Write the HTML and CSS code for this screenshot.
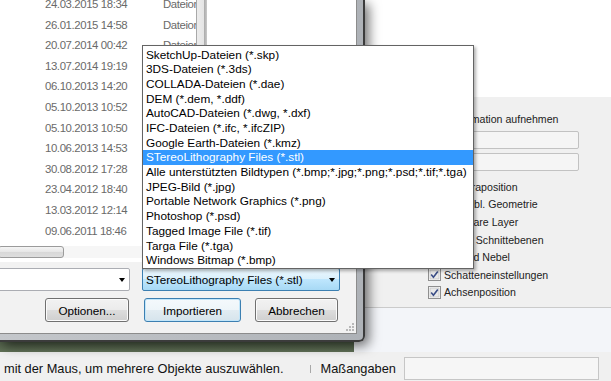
FILE: index.html
```html
<!DOCTYPE html>
<html lang="de">
<head>
<meta charset="utf-8">
<title>Importieren</title>
<link rel="stylesheet" href="styles.css">
</head>
<body>
<div class="app">
  <div class="main">
    <div class="viewport"></div>
    <div class="tray">
      <div class="tray-head"></div>
      <div class="tray-panel">
        <div class="tray-label">Kamerainformation aufnehmen</div>
        <div class="tray-input"></div>
        <div class="tray-input"></div>
        <ul class="checks">
          <li><svg class="cb" viewBox="0 0 13 13"><rect x="0.5" y="0.5" width="12" height="12" fill="#fff" stroke="#8f8f8f"/><rect x="2" y="2" width="9" height="9" fill="#e9e9e9" stroke="#c4c4c4" stroke-width="0.8"/><path d="M3.2 6.6 L5.4 9.3 L9.8 3.4" fill="none" stroke="#3a4d86" stroke-width="1.6"/></svg>Kameraposition</li>
          <li><svg class="cb" viewBox="0 0 13 13"><rect x="0.5" y="0.5" width="12" height="12" fill="#fff" stroke="#8f8f8f"/><rect x="2" y="2" width="9" height="9" fill="#e9e9e9" stroke="#c4c4c4" stroke-width="0.8"/><path d="M3.2 6.6 L5.4 9.3 L9.8 3.4" fill="none" stroke="#3a4d86" stroke-width="1.6"/></svg>Ausgebl. Geometrie</li>
          <li><svg class="cb" viewBox="0 0 13 13"><rect x="0.5" y="0.5" width="12" height="12" fill="#fff" stroke="#8f8f8f"/><rect x="2" y="2" width="9" height="9" fill="#e9e9e9" stroke="#c4c4c4" stroke-width="0.8"/><path d="M3.2 6.6 L5.4 9.3 L9.8 3.4" fill="none" stroke="#3a4d86" stroke-width="1.6"/></svg>Sichtbare Layer</li>
          <li><svg class="cb" viewBox="0 0 13 13"><rect x="0.5" y="0.5" width="12" height="12" fill="#fff" stroke="#8f8f8f"/><rect x="2" y="2" width="9" height="9" fill="#e9e9e9" stroke="#c4c4c4" stroke-width="0.8"/><path d="M3.2 6.6 L5.4 9.3 L9.8 3.4" fill="none" stroke="#3a4d86" stroke-width="1.6"/></svg>Aktive Schnittebenen</li>
          <li><svg class="cb" viewBox="0 0 13 13"><rect x="0.5" y="0.5" width="12" height="12" fill="#fff" stroke="#8f8f8f"/><rect x="2" y="2" width="9" height="9" fill="#e9e9e9" stroke="#c4c4c4" stroke-width="0.8"/><path d="M3.2 6.6 L5.4 9.3 L9.8 3.4" fill="none" stroke="#3a4d86" stroke-width="1.6"/></svg>Stil und Nebel</li>
          <li><svg class="cb" viewBox="0 0 13 13"><rect x="0.5" y="0.5" width="12" height="12" fill="#fff" stroke="#8f8f8f"/><rect x="2" y="2" width="9" height="9" fill="#e9e9e9" stroke="#c4c4c4" stroke-width="0.8"/><path d="M3.2 6.6 L5.4 9.3 L9.8 3.4" fill="none" stroke="#3a4d86" stroke-width="1.6"/></svg>Schatteneinstellungen</li>
          <li><svg class="cb" viewBox="0 0 13 13"><rect x="0.5" y="0.5" width="12" height="12" fill="#fff" stroke="#8f8f8f"/><rect x="2" y="2" width="9" height="9" fill="#e9e9e9" stroke="#c4c4c4" stroke-width="0.8"/><path d="M3.2 6.6 L5.4 9.3 L9.8 3.4" fill="none" stroke="#3a4d86" stroke-width="1.6"/></svg>Achsenposition</li>
        </ul>
      </div>
      <div class="tray-foot"></div>
    </div>
  </div>
  <div class="statusbar">
    <span class="status-text">mit der Maus, um mehrere Objekte auszuwählen.</span>
    <span class="sep"></span>
    <span class="status-label">Maßangaben</span>
    <span class="vcb"></span>
  </div>

  <div class="dialog">
    <div class="dlg-body">
      <div class="browser">
        <div class="files">
          <div class="rows">
            <div class="rows-inner">
              <div class="row"><span class="date">24.03.2015 18:34</span>Dateiordner</div>
              <div class="row"><span class="date">26.01.2015 14:58</span>Dateiordner</div>
              <div class="row"><span class="date">20.07.2014 00:42</span>Dateiordner</div>
              <div class="row"><span class="date">13.07.2014 19:19</span>Dateiordner</div>
              <div class="row"><span class="date">06.10.2013 14:20</span>Dateiordner</div>
              <div class="row"><span class="date">05.10.2013 10:52</span>Dateiordner</div>
              <div class="row"><span class="date">05.10.2013 10:50</span>Dateiordner</div>
              <div class="row"><span class="date">10.06.2013 14:53</span>Dateiordner</div>
              <div class="row"><span class="date">30.08.2012 17:28</span>Dateiordner</div>
              <div class="row"><span class="date">23.04.2012 18:40</span>Dateiordner</div>
              <div class="row"><span class="date">13.03.2012 12:14</span>Dateiordner</div>
              <div class="row"><span class="date">09.06.2011 18:46</span>Dateiordner</div>
            </div>
          </div>
          <div class="hscroll"><div class="thumb"></div></div>
        </div>
        <div class="splitter"></div>
        <div class="preview"></div>
      </div>
      <div class="dlg-bottom">
        <div class="dlg-row">
          <div class="combo name"><span class="arrow"></span></div>
          <div class="combo type"><span class="combo-text">STereoLithography Files (*.stl)</span><span class="arrow"></span></div>
        </div>
        <div class="dlg-row buttons">
          <button class="btn b-opt">Optionen...</button>
          <button class="btn b-imp">Importieren</button>
          <button class="btn b-abb">Abbrechen</button>
        </div>
        <svg class="grip" viewBox="0 0 9 9"><g fill="#b8b8b8"><rect x="7" y="1" width="2" height="2"/><rect x="4" y="4" width="2" height="2"/><rect x="7" y="4" width="2" height="2"/><rect x="1" y="7" width="2" height="2"/><rect x="4" y="7" width="2" height="2"/><rect x="7" y="7" width="2" height="2"/></g></svg>
      </div>
    </div>
  </div>

  <ul class="droplist">
    <li>SketchUp-Dateien (*.skp)</li>
    <li>3DS-Dateien (*.3ds)</li>
    <li>COLLADA-Dateien (*.dae)</li>
    <li>DEM (*.dem, *.ddf)</li>
    <li>AutoCAD-Dateien (*.dwg, *.dxf)</li>
    <li>IFC-Dateien (*.ifc, *.ifcZIP)</li>
    <li>Google Earth-Dateien (*.kmz)</li>
    <li class="sel">STereoLithography Files (*.stl)</li>
    <li>Alle unterstützten Bildtypen (*.bmp;*.jpg;*.png;*.psd;*.tif;*.tga)</li>
    <li>JPEG-Bild (*.jpg)</li>
    <li>Portable Network Graphics (*.png)</li>
    <li>Photoshop (*.psd)</li>
    <li>Tagged Image File (*.tif)</li>
    <li>Targa File (*.tga)</li>
    <li>Windows Bitmap (*.bmp)</li>
  </ul>
</div>
</body>
</html>
```

FILE: styles.css
```css
html, body {
  margin: 0;
  padding: 0;
}
body {
  width: 611px;
  height: 381px;
  overflow: hidden;
  font-family: "Liberation Sans", Arial, sans-serif;
  color: #000;
}
.app {
  position: relative;
  width: 611px;
  height: 381px;
  overflow: hidden;
  background: #f0f0f0;
}

/* main application window */
.main {
  display: flex;
  height: 352px;
}
.viewport {
  width: 354px;
  flex: none;
  background: linear-gradient(#3f4c39 0, #4e5d47 340px, #617257 352px);
}
.tray {
  flex: 1;
  display: flex;
  flex-direction: column;
}
.tray-head {
  height: 97px;
  background: #fff;
}
.tray-panel {
  height: 211px;
  box-sizing: border-box;
  background: #f0f0f0;
  border-bottom: 1px solid #cbcbcb;
  padding: 15px 32px 0 59px;
  font-size: 10.6px;
  color: #222;
}
.tray-label {
  line-height: 14px;
  white-space: nowrap;
}
.tray-input {
  height: 18px;
  box-sizing: border-box;
  border: 1px solid #c2c2c2;
  border-radius: 2px;
  background: #f5f5f5;
  margin-top: 5px;
}
.tray-input + .tray-input {
  margin-top: 4px;
}
.checks {
  list-style: none;
  margin: 7px 0 0 15px;
  padding: 0;
}
.checks li {
  height: 17.6px;
  display: flex;
  align-items: center;
  white-space: nowrap;
}
.cb {
  width: 13px;
  height: 13px;
  margin-right: 3px;
  flex: none;
}
.tray-foot {
  flex: 1;
  background: #f3f5f9;
}

/* status bar */
.statusbar {
  height: 29px;
  display: flex;
  align-items: flex-start;
  background: #f0f0f0;
  font-size: 12.8px;
  color: #111;
  white-space: nowrap;
}
.status-text {
  margin: 9px 0 0 4px;
  line-height: 16px;
}
.sep {
  width: 1px;
  height: 8px;
  background: #a8a8a8;
  margin: 13px 0 0 26px;
}
.status-label {
  margin: 9px 0 0 10px;
  line-height: 16px;
}
.vcb {
  width: 195px;
  height: 23px;
  box-sizing: border-box;
  border: 1px solid #c6c6c6;
  background: #f6f6f6;
  margin: 5px 0 0 8px;
}

/* file dialog */
.dialog {
  position: absolute;
  left: 0;
  top: 0;
  width: 365px;
  height: 342px;
  box-sizing: border-box;
  padding: 0 6px 6px 0;
  background: linear-gradient(90deg, #c4c7cb, #aeb2b7);
  border-right: 2px solid #3b3b3b;
  border-bottom: 2px solid #3b3b3b;
  border-bottom-right-radius: 6px;
  box-shadow: 4px 4px 12px rgba(0, 0, 0, 0.55);
}
.dlg-body {
  height: 100%;
  box-sizing: border-box;
  border-right: 1px solid #8c8c8c;
  border-bottom: 1px solid #8c8c8c;
  background: #f2f2f2;
  display: flex;
  flex-direction: column;
  position: relative;
}
.browser {
  height: 262px;
  display: flex;
  background: #fff;
}
.files {
  width: 196px;
  display: flex;
  flex-direction: column;
  overflow: hidden;
}
.rows {
  flex: 1;
  overflow: hidden;
  font-size: 11.4px;
  letter-spacing: -0.4px;
  color: #6a6a6a;
}
.rows-inner {
  margin-top: -6px;
}
.row {
  height: 20.6px;
  line-height: 20.6px;
  white-space: nowrap;
  padding-left: 45px;
}
.date {
  display: inline-block;
  width: 118px;
}
.hscroll {
  height: 12px;
  margin-bottom: 4px;
  background: #f6f6f6;
}
.thumb {
  width: 66px;
  height: 12px;
  margin-left: -2px;
  box-sizing: border-box;
  border: 1px solid #9b9b9b;
  border-radius: 3px;
  background: linear-gradient(#f5f5f5, #e6e6e6 50%, #d8d8d8 51%, #dedede);
}
.splitter {
  width: 11px;
  box-sizing: border-box;
  border-left: 1px solid #a9a9a9;
  background: linear-gradient(90deg, #ececec, #e4e4e4 7px, #a9a9a9 7px, #c9c9c9);
}
.preview {
  flex: 1;
  background: #fff;
}
.dlg-bottom {
  flex: 1;
  padding-top: 6px;
}
.dlg-row {
  display: flex;
  height: 23px;
}
.combo {
  box-sizing: border-box;
  height: 23px;
  border: 1px solid #abadb3;
  border-radius: 2px;
  background: #fff;
  display: flex;
  align-items: center;
  font-size: 11.7px;
  white-space: nowrap;
}
.combo.name {
  width: 132px;
  margin-left: -2px;
}
.combo.type {
  width: 198px;
  margin-left: 12px;
  padding-left: 3px;
  border-color: #3c7fb1;
  background: linear-gradient(#eaf6fd, #d9f0fc 50%, #bee6fd 50%, #a7d9f5);
}
.arrow {
  margin-left: auto;
  margin-right: 4px;
  width: 0;
  height: 0;
  border-left: 3.5px solid transparent;
  border-right: 3.5px solid transparent;
  border-top: 4px solid #000;
}
.buttons {
  margin-top: 7px;
  height: 24px;
  padding-left: 45px;
}
.btn {
  height: 24px;
  box-sizing: border-box;
  padding: 0;
  font-family: "Liberation Sans", Arial, sans-serif;
  font-size: 11.7px;
  color: #000;
  border: 1px solid #707070;
  border-radius: 3px;
  background: linear-gradient(#f2f2f2, #ebebeb 50%, #dddddd 51%, #cfcfcf);
  box-shadow: inset 0 0 0 1px #fbfbfb;
}
.b-opt {
  width: 84px;
}
.b-imp {
  width: 97px;
  margin-left: 15px;
  border-color: #3c7fb1;
  background: linear-gradient(#f4f9fc, #eef5f9 50%, #e2ecf2 51%, #d6e4ec);
  box-shadow: inset 0 0 0 1px #c2e6fa;
}
.b-abb {
  width: 83px;
  margin-left: 14px;
}
.grip {
  position: absolute;
  right: 2px;
  bottom: 2px;
  width: 9px;
  height: 9px;
}

/* open dropdown list of the file type combo */
.droplist {
  position: absolute;
  left: 142px;
  top: 45px;
  width: 332px;
  box-sizing: border-box;
  margin: 0;
  padding: 1.6px 0 0 0;
  list-style: none;
  background: #fff;
  border: 1px solid #646464;
  box-shadow: 2px 2px 3px rgba(0, 0, 0, 0.3);
  font-size: 11.8px;
}
.droplist li {
  height: 14.7px;
  line-height: 14.7px;
  padding-left: 3px;
  white-space: nowrap;
}
.droplist li.sel {
  background: #3399ff;
  color: #fff;
}
```
